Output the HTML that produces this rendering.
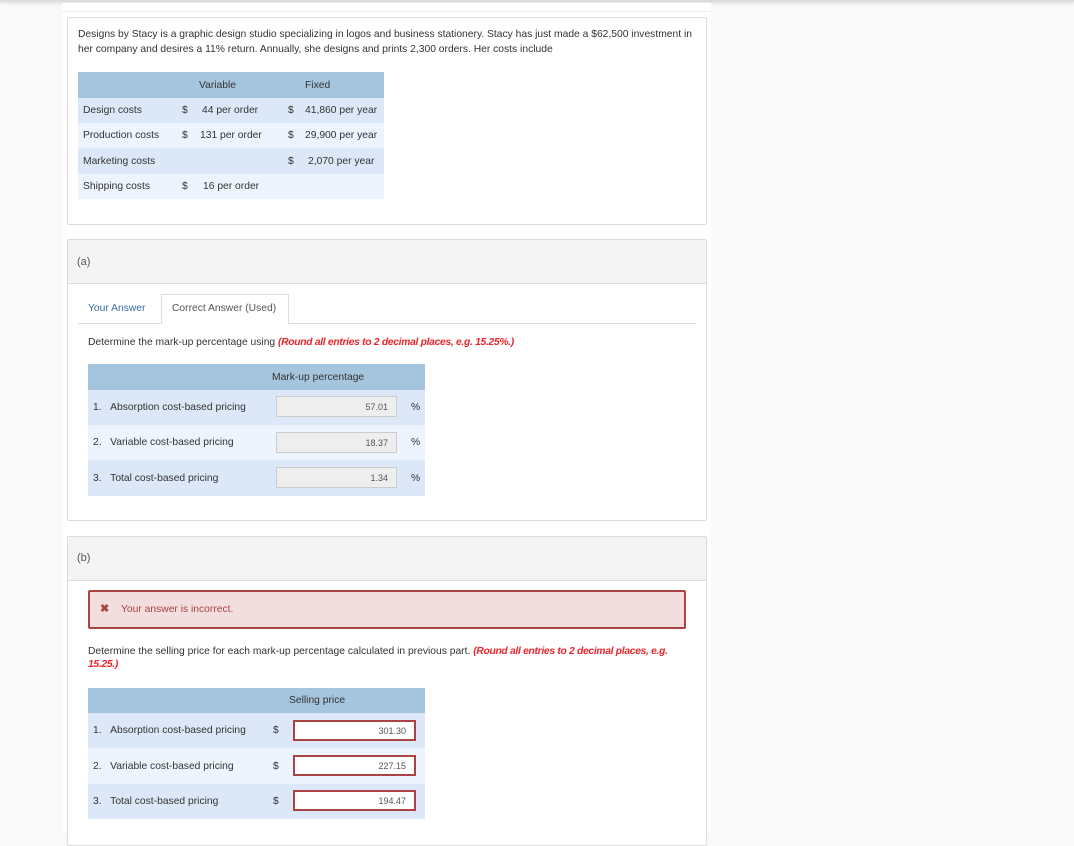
<!DOCTYPE html>
<html><head><meta charset="utf-8"><style>
*{box-sizing:border-box;margin:0;padding:0}
body{width:1074px;height:832px;background:#f9f9f9;font-family:"Liberation Sans",sans-serif;color:#333;position:relative;overflow:hidden;font-size:10.3px;letter-spacing:0}
.a{position:absolute;white-space:nowrap}
.topbar{position:absolute;left:0;top:0;width:1074px;height:2px;background:#ddd;box-shadow:0 1px 3px rgba(0,0,0,.15)}
.wrap{position:absolute;left:62px;top:3px;width:649px;height:829px;background:#fff}
.panel{position:absolute;left:67px;width:640px;border:1px solid #dcdcdc;border-radius:2px;background:#fff}
.hd{position:absolute;left:0;top:0;width:100%;height:44px;background:#f4f4f4;border-bottom:1px solid #dcdcdc}
.inp{position:absolute;height:21px;background:#eee;border:1px solid #ccc;font-size:9px;text-align:right;padding:5px 8px 0 0;color:#555}
.rinp{position:absolute;height:21px;background:#fff;border:2px solid #a94442;font-size:9px;text-align:right;padding:4px 8px 0 0;color:#555}
.red{color:#e8252b;font-weight:bold;font-style:italic;letter-spacing:-0.3px}
</style></head><body>
<div class="topbar"></div>
<div class="wrap"></div>
<div class="a" style="left:62px;top:11px;width:649px;height:1px;background:#eee"></div>

<div class="panel" style="top:17px;height:208px"></div>
<div class="a" style="left:78px;top:29px">Designs by Stacy is a graphic design studio specializing in logos and business stationery. Stacy has just made a $62,500 investment in</div>
<div class="a" style="left:78px;top:44px">her company and desires a 11% return. Annually, she designs and prints 2,300 orders. Her costs include</div>

<div class="a" style="left:78px;top:72px;width:306px;height:26px;background:#a5c5de"></div>
<div class="a" style="left:78px;top:98px;width:306px;height:25px;background:#dce8f8"></div>
<div class="a" style="left:78px;top:123px;width:306px;height:25px;background:#edf4fe"></div>
<div class="a" style="left:78px;top:148px;width:306px;height:26px;background:#dce8f8"></div>
<div class="a" style="left:78px;top:174px;width:306px;height:25px;background:#edf4fe"></div>
<div class="a" style="left:199px;top:80px">Variable</div>
<div class="a" style="left:305px;top:80px">Fixed</div>
<div class="a" style="left:83px;top:105px">Design costs</div>
<div class="a" style="left:83px;top:130px">Production costs</div>
<div class="a" style="left:83px;top:156px">Marketing costs</div>
<div class="a" style="left:83px;top:181px">Shipping costs</div>
<div class="a" style="left:182px;top:105px">$</div><div class="a" style="left:202px;top:105px">44 per order</div>
<div class="a" style="left:182px;top:130px">$</div><div class="a" style="left:200px;top:130px">131 per order</div>
<div class="a" style="left:182px;top:181px">$</div><div class="a" style="left:203px;top:181px">16 per order</div>
<div class="a" style="left:288px;top:105px">$</div><div class="a" style="left:305px;top:105px">41,860 per year</div>
<div class="a" style="left:288px;top:130px">$</div><div class="a" style="left:305px;top:130px">29,900 per year</div>
<div class="a" style="left:288px;top:156px">$</div><div class="a" style="left:308px;top:156px">2,070 per year</div>

<div class="panel" style="top:239px;height:282px"><div class="hd"></div></div>
<div class="a" style="left:77px;top:256px;font-size:11px;color:#555">(a)</div>
<div class="a" style="left:78px;top:323px;width:618px;height:1px;background:#ddd"></div>
<div class="a" style="left:161px;top:294px;width:128px;height:30px;border:1px solid #ddd;border-bottom:none;background:#fff"></div>
<div class="a" style="left:88px;top:303px;color:#3a6ea5">Your Answer</div>
<div class="a" style="left:172px;top:303px;color:#555">Correct Answer (Used)</div>
<div class="a" style="left:88px;top:337px">Determine the mark-up percentage using <span class="red">(Round all entries to 2 decimal places, e.g. 15.25%.)</span></div>

<div class="a" style="left:88px;top:364px;width:337px;height:26px;background:#a5c5de"></div>
<div class="a" style="left:88px;top:390px;width:337px;height:35px;background:#dce8f8"></div>
<div class="a" style="left:88px;top:425px;width:337px;height:35px;background:#edf4fe"></div>
<div class="a" style="left:88px;top:460px;width:337px;height:36px;background:#dce8f8"></div>
<div class="a" style="left:272px;top:372px">Mark-up percentage</div>
<div class="a" style="left:93px;top:402px">1.&nbsp;&nbsp;&nbsp;Absorption cost-based pricing</div>
<div class="a" style="left:93px;top:437px">2.&nbsp;&nbsp;&nbsp;Variable cost-based pricing</div>
<div class="a" style="left:93px;top:473px">3.&nbsp;&nbsp;&nbsp;Total cost-based pricing</div>
<div class="inp" style="left:276px;top:396px;width:121px">57.01</div>
<div class="inp" style="left:276px;top:432px;width:121px">18.37</div>
<div class="inp" style="left:276px;top:467px;width:121px">1.34</div>
<div class="a" style="left:411px;top:402px">%</div>
<div class="a" style="left:411px;top:437px">%</div>
<div class="a" style="left:411px;top:473px">%</div>

<div class="panel" style="top:536px;height:310px"><div class="hd"></div></div>
<div class="a" style="left:77px;top:552px;font-size:11px;color:#555">(b)</div>
<div class="a" style="left:88px;top:590px;width:598px;height:39px;background:#f2dede;border:2px solid #a94442;border-radius:2px"></div>
<div class="a" style="left:100px;top:602px;color:#a94442;font-weight:bold;font-size:11px">✖</div>
<div class="a" style="left:121px;top:604px;color:#a94442">Your answer is incorrect.</div>
<div class="a" style="left:88px;top:646px">Determine the selling price for each mark-up percentage calculated in previous part. <span class="red">(Round all entries to 2 decimal places, e.g.</span></div>
<div class="a" style="left:88px;top:659px"><span class="red">15.25.)</span></div>

<div class="a" style="left:88px;top:688px;width:337px;height:25px;background:#a5c5de"></div>
<div class="a" style="left:88px;top:713px;width:337px;height:35px;background:#dce8f8"></div>
<div class="a" style="left:88px;top:748px;width:337px;height:36px;background:#edf4fe"></div>
<div class="a" style="left:88px;top:784px;width:337px;height:35px;background:#dce8f8"></div>
<div class="a" style="left:289px;top:695px">Selling price</div>
<div class="a" style="left:93px;top:725px">1.&nbsp;&nbsp;&nbsp;Absorption cost-based pricing</div>
<div class="a" style="left:93px;top:761px">2.&nbsp;&nbsp;&nbsp;Variable cost-based pricing</div>
<div class="a" style="left:93px;top:796px">3.&nbsp;&nbsp;&nbsp;Total cost-based pricing</div>
<div class="a" style="left:273px;top:725px">$</div>
<div class="a" style="left:273px;top:761px">$</div>
<div class="a" style="left:273px;top:796px">$</div>
<div class="rinp" style="left:293px;top:720px;width:123px">301.30</div>
<div class="rinp" style="left:293px;top:755px;width:123px">227.15</div>
<div class="rinp" style="left:293px;top:790px;width:123px">194.47</div>
</body></html>
